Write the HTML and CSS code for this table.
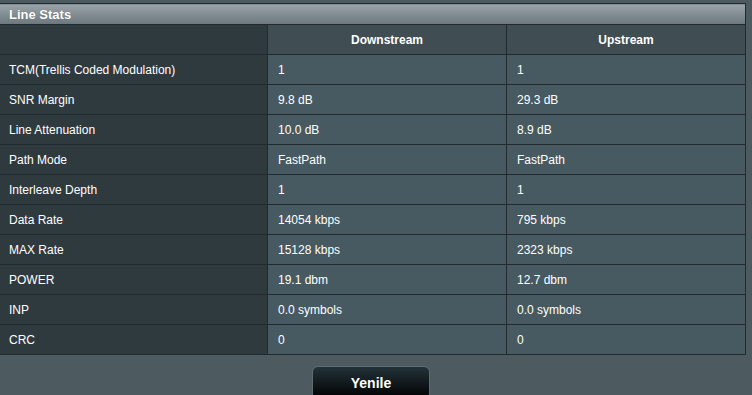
FILE: index.html
```html
<!DOCTYPE html>
<html lang="tr">
<head>
    <meta charset="UTF-8">
    <title>Line Stats</title>
    <link rel="stylesheet" href="styles.css">
</head>
<body>
    <div id="panel">
        <table class="stats">
            <thead>
                <tr><th colspan="3" class="baslik">Line Stats</th></tr>
                <tr class="kolonlar">
                    <td class="etiket"></td>
                    <th>Downstream</th>
                    <th>Upstream</th>
                </tr>
            </thead>
            <tbody>
                <tr><td class="etiket">TCM(Trellis Coded Modulation)</td><td>1</td><td>1</td></tr>
                <tr><td class="etiket">SNR Margin</td><td>9.8 dB</td><td>29.3 dB</td></tr>
                <tr><td class="etiket">Line Attenuation</td><td>10.0 dB</td><td>8.9 dB</td></tr>
                <tr><td class="etiket">Path Mode</td><td>FastPath</td><td>FastPath</td></tr>
                <tr><td class="etiket">Interleave Depth</td><td>1</td><td>1</td></tr>
                <tr><td class="etiket">Data Rate</td><td>14054 kbps</td><td>795 kbps</td></tr>
                <tr><td class="etiket">MAX Rate</td><td>15128 kbps</td><td>2323 kbps</td></tr>
                <tr><td class="etiket">POWER</td><td>19.1 dbm</td><td>12.7 dbm</td></tr>
                <tr><td class="etiket">INP</td><td>0.0 symbols</td><td>0.0 symbols</td></tr>
                <tr><td class="etiket">CRC</td><td>0</td><td>0</td></tr>
            </tbody>
        </table>

        <div class="alt">
            <button class="yenile">Yenile</button>
        </div>
    </div>
</body>
</html>
```

FILE: styles.css
```css
body{
    margin: 0;
    background-color: #4d5a5f;
    font-family: "Liberation Sans", Arial, sans-serif;
    font-size: 12px;
    color: #ffffff;
}

#panel{
    padding-top: 3px;
}

.stats{
    width: 747px;
    margin-left: -1px;
    border-collapse: collapse;
    border: 1px solid #222a2e;
}

.stats td,
.stats th{
    border: 1px solid #222a2e;
    height: 29px;
    padding: 0 0 0 10px;
    text-align: left;
    background-color: #475a61;
    font-weight: normal;
}

.stats th.baslik{
    height: 20px;
    padding-left: 9px;
    font-size: 13px;
    font-weight: bold;
    background: linear-gradient(#9aa4a9, #6b777d);
    text-shadow: 0 0 1px rgba(0, 0, 0, 0.3);
}

.kolonlar th{
    text-align: center;
    font-weight: bold;
    padding: 0;
    background-color: #404e54;
}

.stats td.etiket{
    width: 258px;
    padding-left: 9px;
    background-color: #2f3a3f;
}

.kolonlar th:nth-child(2){
    width: 238px;
}

.alt{
    text-align: center;
    padding-top: 11px;
}

.yenile{
    width: 118px;
    height: 34px;
    margin-left: -10px;
    color: white;
    font-family: "Liberation Sans", Arial, sans-serif;
    font-size: 14px;
    font-weight: bold;
    border: 1px solid #5f6d72;
    border-radius: 6px;
    background: linear-gradient(#233239, #000000);
}
```
